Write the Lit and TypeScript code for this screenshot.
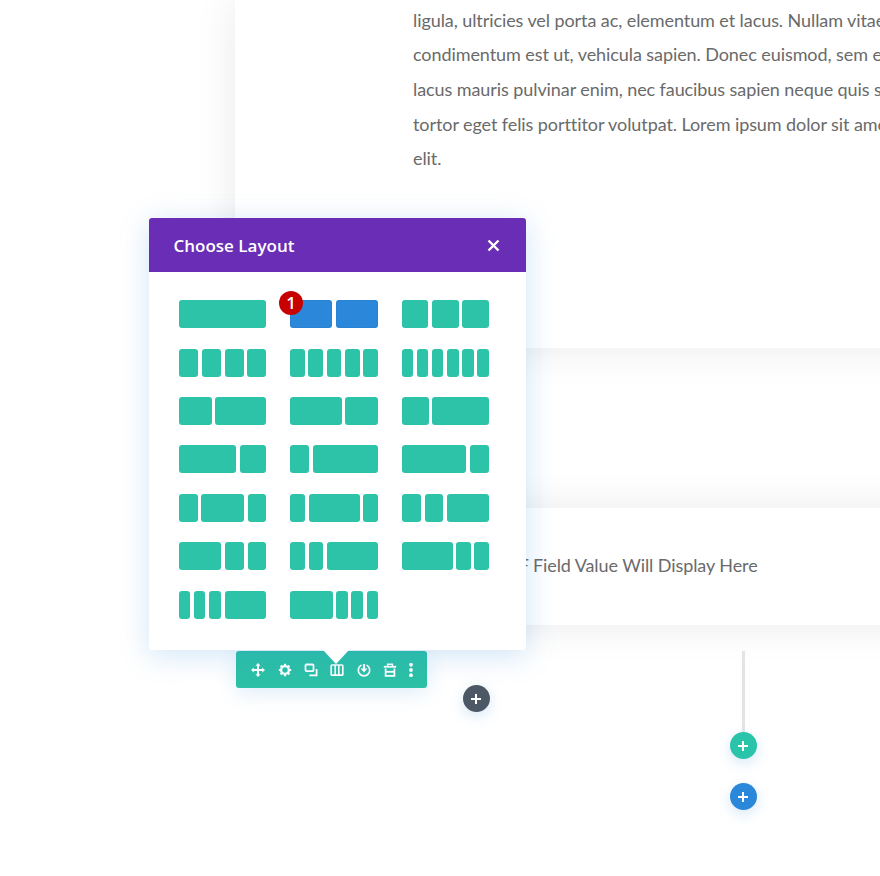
import { LitElement, html, css, svg } from "lit";
import { customElement } from "lit/decorators.js";

// column widths of each layout tile, used as flex ratios
const LAYOUTS: number[][] = [
  [1], [1, 1], [1, 1, 1],
  [1, 1, 1, 1], [1, 1, 1, 1, 1], [1, 1, 1, 1, 1, 1],
  [32.5, 51], [51, 32], [27, 57],
  [57, 26.5], [18.7, 64], [64.3, 19.3],
  [18.7, 42, 18.7], [14.7, 50.3, 14], [19.3, 18.7, 41.7],
  [42, 19.3, 18.7], [14.7, 14.7, 50.3], [51.3, 14.7, 14.7],
  [11.3, 11.3, 12, 41.7], [42, 11.3, 11.7, 11],
];

const TOOL_ICONS = [
  // move
  svg`<path d="M7 1.5v11M1.5 7h11" fill="none" stroke="#fff" stroke-width="2"/>
      <path d="M7 0l2.6 2.8H4.4zM7 14l2.6-2.8H4.4zM0 7l2.8-2.6v5.2zM14 7l-2.8-2.6v5.2z" fill="#fff"/>`,
  // settings
  svg`<circle cx="7" cy="7" r="3.9" fill="none" stroke="#fff" stroke-width="2.4"/>
      <path d="M7 .8v2.4M7 10.8v2.4M.8 7h2.4M10.8 7h2.4M2.6 2.6l1.7 1.7M9.7 9.7l1.7 1.7M2.6 11.4l1.7-1.7M9.7 4.3l1.7-1.7" stroke="#fff" stroke-width="2.2"/>`,
  // duplicate
  svg`<rect x="1.5" y="1.5" width="8" height="6.6" rx=".8" fill="none" stroke="#fff" stroke-width="1.8"/>
      <path d="M12.6 6v6.4H5.4" fill="none" stroke="#fff" stroke-width="1.8"/>`,
  // columns
  svg`<rect x="1.2" y="2" width="11.6" height="10.2" rx=".8" fill="none" stroke="#fff" stroke-width="1.7"/>
      <path d="M5.2 2v10M8.8 2v10" stroke="#fff" stroke-width="1.6"/>`,
  // save
  svg`<path d="M3.9 2.4a5.7 5.7 0 1 0 6.2 0" fill="none" stroke="#fff" stroke-width="1.7" stroke-linecap="round"/>
      <path d="M7 1v5" stroke="#fff" stroke-width="2.2"/>
      <path d="M3.6 5.4h6.8L7 9.6z" fill="#fff"/>`,
  // delete
  svg`<path d="M.8 3.8h12.4" stroke="#fff" stroke-width="1.8"/>
      <path d="M4.6 3.2V1.2h4.8v2" fill="none" stroke="#fff" stroke-width="1.5"/>
      <path d="M2.6 5.6v7.2h8.8V5.6" fill="none" stroke="#fff" stroke-width="1.7"/>
      <path d="M2.6 8.8h8.8" stroke="#fff" stroke-width="1.8"/>`,
];

@customElement("app-root")
export class AppRoot extends LitElement {
  static styles = css`
    :host {
      display: block;
      position: relative;
      width: 880px;
      height: 876px;
      overflow: hidden;
      background: #fff;
      color: #6a6a6a;
      font-family: "Lato", "Liberation Sans", sans-serif;
      font-size: 18px;
      letter-spacing: -0.08px;
    }
    .page {
      display: flex;
      flex-direction: column;
      margin-left: 235px;
      width: 700px;
    }
    .panel {
      background: #fff;
      box-shadow: 0 0 40px rgba(0, 0, 0, 0.085);
    }
    .intro {
      height: 345.5px;
      padding: 2.5px 0 0 178px;
      line-height: 34.7px;
      white-space: nowrap;
    }
    .intro div {
      height: 34.7px;
    }
    .acf {
      margin-top: 160px;
      height: 117px;
      box-sizing: border-box;
      padding: 0 0 3px 260px;
      display: flex;
      align-items: center;
      white-space: nowrap;
    }
    .adders {
      display: flex;
      flex-direction: column;
      align-items: center;
      width: 27px;
      margin: 26px 0 0 494.5px;
    }
    .line {
      width: 3px;
      height: 81px;
      background: #e4e4e4;
    }
    .round {
      width: 27px;
      height: 27px;
      border-radius: 50%;
      display: flex;
      align-items: center;
      justify-content: center;
      box-shadow: 0 4px 14px rgba(43, 135, 218, 0.2);
    }
    .round svg {
      width: 10px;
      height: 10px;
    }
    .green {
      background: #29c4a9;
    }
    .blue {
      background: #2b87da;
      margin-top: 24px;
    }
    .dark {
      background: #4c5866;
      position: absolute;
      left: 462.5px;
      top: 685px;
    }
    .modal {
      position: absolute;
      left: 149px;
      top: 218px;
      width: 377px;
      height: 432px;
      background: #fff;
      border-radius: 3px;
      box-shadow: 0 5px 30px rgba(43, 135, 218, 0.22);
      z-index: 2;
    }
    .modal::after {
      content: "";
      position: absolute;
      left: 174px;
      top: 432px;
      border-style: solid;
      border-width: 14px 13.5px 0;
      border-color: #fff transparent transparent;
    }
    .head {
      height: 54px;
      background: #6a2db5;
      border-radius: 3px 3px 0 0;
      display: flex;
      align-items: center;
      justify-content: space-between;
      padding: 0 25px 0 24.5px;
      color: #fff;
      font-family: "Open Sans", sans-serif;
      font-size: 17px;
      font-weight: 600;
      letter-spacing: 0;
    }
    .head svg {
      width: 15px;
      height: 15px;
    }
    .grid {
      display: grid;
      grid-template-columns: repeat(3, 87.4px);
      grid-auto-rows: 28px;
      column-gap: 23.9px;
      row-gap: 20.4px;
      padding: 28.3px 0 0 30px;
    }
    .tile {
      display: flex;
      gap: 3.6px;
    }
    .tile span {
      background: #2cc3a8;
      border-radius: 3px;
      flex-basis: 0;
    }
    .tile.active span {
      background: #2b87da;
      box-shadow: inset 0 0 0 1px rgba(0, 60, 140, 0.06);
    }
    .badge {
      position: absolute;
      left: 130px;
      top: 73px;
      width: 24px;
      height: 24px;
      border-radius: 50%;
      background: #c70000;
      color: #fff;
      font-family: "Open Sans", sans-serif;
      font-size: 17px;
      font-weight: 600;
      letter-spacing: 0;
      line-height: 24px;
      text-align: center;
    }
    .bar {
      position: absolute;
      left: 236px;
      top: 651px;
      width: 191px;
      height: 37px;
      box-sizing: border-box;
      padding-left: 15.2px;
      background: #2cc0a6;
      border-radius: 3px;
      display: flex;
      align-items: center;
      gap: 12.4px;
      box-shadow: 0 5px 20px rgba(43, 135, 218, 0.15);
      z-index: 1;
    }
    .bar svg {
      width: 14px;
      height: 14px;
      flex: none;
    }
    .bar svg.dots {
      width: 6px;
      margin-left: -1.4px;
    }
  `;

  plus() {
    return html`<svg viewBox="0 0 10 10"><path d="M5 0v10M0 5h10" stroke="#fff" stroke-width="2"/></svg>`;
  }

  render() {
    return html`
      <div class="page">
        <div class="panel intro">
          <div>ligula, ultricies vel porta ac, elementum et lacus. Nullam vitae</div>
          <div>condimentum est ut, vehicula sapien. Donec euismod, sem et</div>
          <div>lacus mauris pulvinar enim, nec faucibus sapien neque quis sem</div>
          <div>tortor eget felis porttitor volutpat. Lorem ipsum dolor sit amet</div>
          <div>elit.</div>
        </div>
        <div class="panel acf">ACF Field Value Will Display Here</div>
        <div class="adders">
          <div class="line"></div>
          <div class="round green">${this.plus()}</div>
          <div class="round blue">${this.plus()}</div>
        </div>
      </div>

      <div class="round dark">${this.plus()}</div>

      <div class="bar">
        ${TOOL_ICONS.map((icon) => html`<svg viewBox="0 0 14 14">${icon}</svg>`)}
        <svg class="dots" viewBox="0 0 6 14">
          <circle cx="3" cy="1.8" r="1.9" fill="#fff"/>
          <circle cx="3" cy="7" r="1.9" fill="#fff"/>
          <circle cx="3" cy="12.2" r="1.9" fill="#fff"/>
        </svg>
      </div>

      <div class="modal">
        <div class="head">
          <span>Choose Layout</span>
          <svg viewBox="0 0 15 15"><path d="M2.5 2.5l10 10M12.5 2.5l-10 10" stroke="#fff" stroke-width="2.4"/></svg>
        </div>
        <div class="grid">
          ${LAYOUTS.map(
            (cols, i) => html`
              <div class="tile ${i === 1 ? "active" : ""}">
                ${cols.map((w) => html`<span style="flex-grow: ${w}"></span>`)}
              </div>
            `
          )}
        </div>
        <div class="badge">1</div>
      </div>
    `;
  }
}
